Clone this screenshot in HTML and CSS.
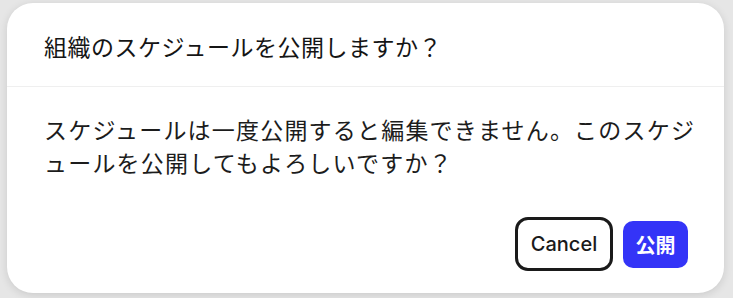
FILE: index.html
```html
<!DOCTYPE html>
<html lang="ja">
<head>
<meta charset="utf-8">
<link rel="stylesheet" href="styles.css">
</head>
<body>
<div class="page">
  <div class="dialog">
    <div class="dialog-header">
      <h2 class="dialog-title">組織のスケジュールを公開しますか？</h2>
    </div>
    <div class="dialog-body">
      <p class="dialog-text">スケジュールは一度公開すると編集できません。このスケジュールを公開してもよろしいですか？</p>
    </div>
    <div class="dialog-footer">
      <button class="btn btn-cancel">Cancel</button>
      <button class="btn btn-primary">公開</button>
    </div>
  </div>
</div>
</body>
</html>
```
FILE: styles.css
```css
html, body {
  margin: 0;
  padding: 0;
}
body {
  width: 733px;
  height: 298px;
  background: #e6e6e6;
  overflow: hidden;
  font-family: "Noto Sans CJK JP", "Noto Sans", sans-serif;
  color: #1c1c1c;
}
.page {
  padding: 3px 0 0 7px;
}
.dialog {
  width: 717px;
  height: 290px;
  background: #ffffff;
  border-radius: 26px;
  box-shadow: 0 2px 8px rgba(0, 0, 0, 0.12);
  display: flex;
  flex-direction: column;
}
.dialog-header {
  height: 84px;
  box-sizing: border-box;
  padding: 28px 37px 0;
  border-bottom: 1px solid #efefef;
}
.dialog-title {
  margin: 0;
  font-size: 23px;
  line-height: 30px;
  font-weight: 400;
  letter-spacing: 0.5px;
  color: #151515;
}
.dialog-body {
  padding: 26px 28px 0 37px;
}
.dialog-text {
  margin: 0;
  font-size: 23px;
  line-height: 33px;
  font-weight: 400;
  letter-spacing: 1.2px;
  line-break: anywhere;
}
.dialog-footer {
  margin-top: auto;
  display: flex;
  justify-content: flex-end;
  align-items: center;
  gap: 10px;
  padding: 0 36px 22px;
}
.btn {
  font-family: "Inter", "Liberation Sans", sans-serif;
  font-size: 20px;
  cursor: pointer;
}
.btn-cancel {
  height: 54px;
  width: 98px;
  background: #fff;
  color: #1a1a1a;
  border: 3px solid #1a1a1a;
  border-radius: 13px;
  font-weight: 500;
}
.btn-primary {
  height: 47px;
  width: 65px;
  background: #3434f7;
  color: #fff;
  border: none;
  border-radius: 10px;
  font-family: "Noto Sans CJK JP", sans-serif;
  font-weight: 700;
  font-size: 20px;
}
```
